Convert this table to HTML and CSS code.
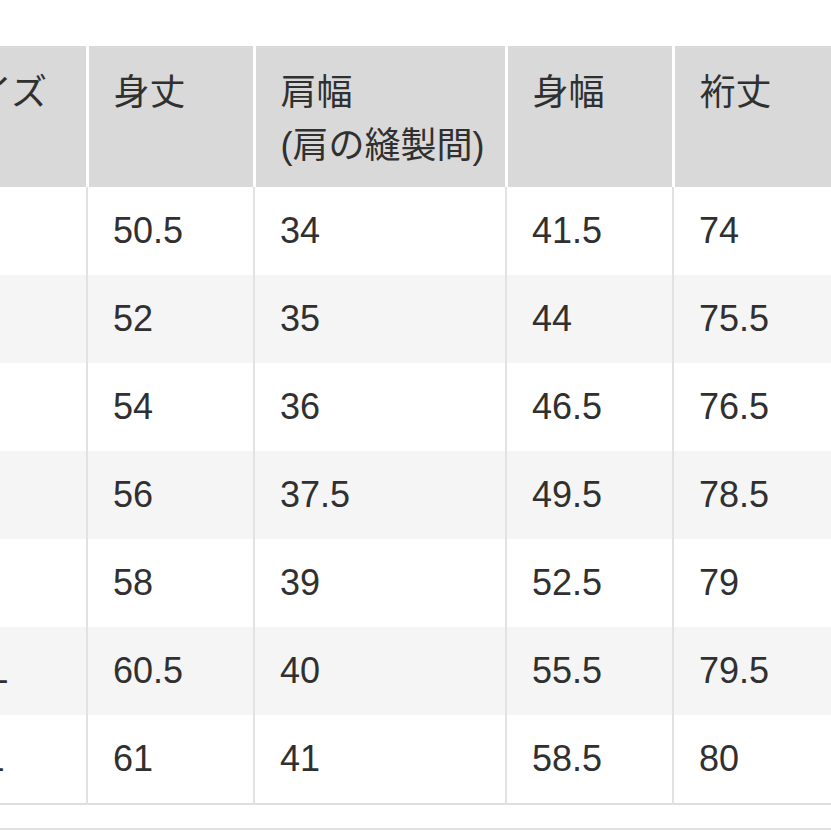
FILE: index.html
```html
<!DOCTYPE html>
<html lang="ja">
<head>
<meta charset="utf-8">
<link rel="stylesheet" href="styles.css">
</head>
<body>
<div class="page">
  <table class="size-table">
    <colgroup>
      <col class="c0"><col class="c1"><col class="c2"><col class="c3"><col class="c4">
    </colgroup>
    <thead>
      <tr>
        <th>サイズ</th>
        <th>身丈</th>
        <th>肩幅<br>(肩の縫製間)</th>
        <th>身幅</th>
        <th>裄丈</th>
      </tr>
    </thead>
    <tbody>
      <tr><td>XS</td><td>50.5</td><td>34</td><td>41.5</td><td>74</td></tr>
      <tr class="alt"><td>S</td><td>52</td><td>35</td><td>44</td><td>75.5</td></tr>
      <tr><td>M</td><td>54</td><td>36</td><td>46.5</td><td>76.5</td></tr>
      <tr class="alt"><td>L</td><td>56</td><td>37.5</td><td>49.5</td><td>78.5</td></tr>
      <tr><td>XL</td><td>58</td><td>39</td><td>52.5</td><td>79</td></tr>
      <tr class="alt"><td>XXL</td><td>60.5</td><td>40</td><td>55.5</td><td>79.5</td></tr>
      <tr><td>3XL</td><td>61</td><td>41</td><td>58.5</td><td>80</td></tr>
    </tbody>
  </table>
  <div class="next-line"></div>
</div>
</body>
</html>
```

FILE: styles.css
```css
html, body {
  margin: 0;
  padding: 0;
  background: #ffffff;
  overflow: hidden;
}

.page {
  width: 831px;
  height: 831px;
  overflow: hidden;
  padding-top: 46px;
  box-sizing: border-box;
  font-family: "Liberation Sans", "Noto Sans CJK JP", sans-serif;
  color: #303030;
}

.size-table {
  margin-left: -88px;
  border-collapse: collapse;
  table-layout: fixed;
  width: 1000px;
  border-bottom: 2px solid #dedede;
}

.c0 { width: 175px; }
.c1 { width: 167px; }
.c2 { width: 252px; }
.c3 { width: 167px; }
.c4 { width: 239px; }

.size-table th,
.size-table td {
  padding: 0 0 0 25px;
  text-align: left;
  font-size: 36px;
  font-weight: normal;
}

.size-table th {
  background: #d9d9d9;
  height: 141px;
  box-sizing: border-box;
  vertical-align: top;
  padding-top: 20px;
  line-height: 53px;
  border-left: 3px solid #ffffff;
}

.size-table td {
  height: 88px;
  line-height: 40px;
  vertical-align: middle;
  border-left: 2px solid #e2e2e2;
}

.size-table th:first-child,
.size-table td:first-child {
  border-left: none;
  padding-left: 28px;
}

.size-table tr.alt td {
  background: #f5f5f5;
}

.next-line {
  margin-top: 23px;
  border-top: 2px solid #e2e2e2;
}
```
